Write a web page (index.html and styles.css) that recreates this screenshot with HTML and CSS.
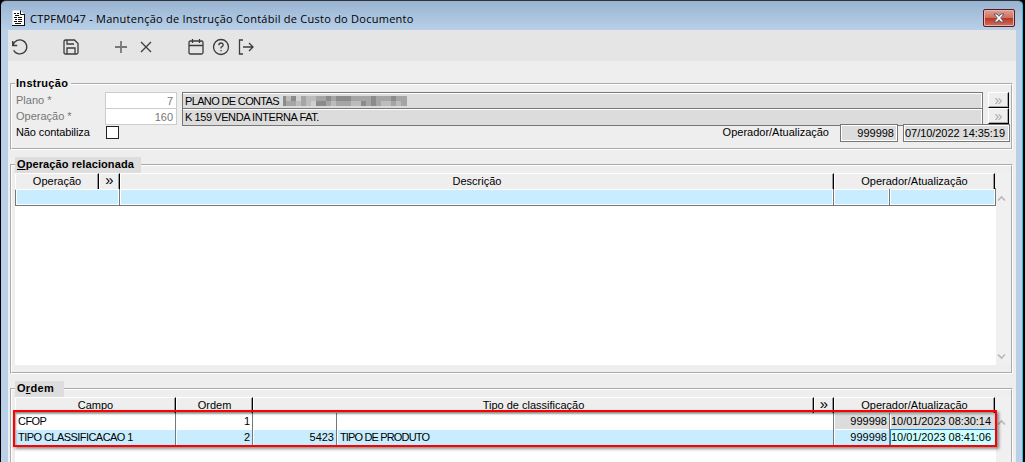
FILE: index.html
```html
<!DOCTYPE html>
<html lang="pt-BR">
<head>
    <meta charset="UTF-8">
    <meta name="viewport" content="width=device-width, initial-scale=1.0">
    <title>CTPFM047 - Manutenção de Instrução Contábil de Custo do Documento</title>
    <link rel="stylesheet" href="styles.css">
</head>
<body>
    <div class="window">
        <header class="titlebar">
            <svg class="doc-icon" width="13" height="16" viewBox="0 0 13 16">
                <path d="M.5.5h8l3.500 3.500v11H.5z" fill="#fff"/>
                <path d="M8.500.5v4h4M12.500 4v11.500M0 15.500h13" fill="none" stroke="#111"/>
                <path d="M2 3.500h2M5 3.500h2M3 5.500h4M2 7.500h3M6 7.500h4M3 9.500h2M6 9.500h4M2 11.500h3M6 11.500h4M3 13.500h6" stroke="#111"/>
            </svg>
            <h1 class="title">CTPFM047 - Manutenção de Instrução Contábil de Custo do Documento</h1>
            <button class="close" aria-label="Fechar">
                <svg width="12" height="10" viewBox="0 0 12 10">
                    <path d="M1 1h3l2 2.300 2-2.300h3L7.700 5 11 9H8L6 6.700 4 9H1l3.300-4z" fill="#fff" stroke="#555f70" stroke-width="1"/>
                </svg>
            </button>
        </header>

        <div class="toolbar">
            <svg class="tool tool-undo" viewBox="0 0 18 18"><path d="M1.700 3v4.500h4.500M2 7.200a7 7 0 1 1 .6 5"/></svg>
            <svg class="tool tool-save" viewBox="0 0 18 18"><path d="M2 3.500Q2 2 3.500 2h9L16 5.500v9q0 1.500-1.500 1.500h-11Q2 16 2 14.500zM5 2v4h7M5 16v-6h8v6"/></svg>
            <svg class="tool tool-add" viewBox="0 0 18 18"><path d="M9 3v12M3 9h12"/></svg>
            <svg class="tool tool-delete" viewBox="0 0 18 18"><path d="M4 4l10 10M14 4L4 14"/></svg>
            <svg class="tool tool-calendar" viewBox="0 0 18 18"><path d="M2 4.500Q2 3 3.500 3h11Q16 3 16 4.500v10q0 1.500-1.500 1.500h-11Q2 16 2 14.500zM2 7.500h14M5.500 1v4M12.500 1v4"/></svg>
            <svg class="tool tool-help" viewBox="0 0 18 18"><circle cx="9" cy="9" r="7.500"/><path d="M6.800 7.200Q7 5 9 5t2.200 2Q11.200 8.300 9 9.300v1.200M9 12v1.300"/></svg>
            <svg class="tool tool-exit" viewBox="0 0 18 18"><path d="M6 2H2.500v14H6M6 9h10M12 5l4 4-4 4"/></svg>
        </div>

        <main class="content">
            <fieldset class="group group-form">
                <legend class="legend-plain">Instrução</legend>
                <div class="field-row disabled">
                    <label class="label">Plano *</label>
                    <span class="code">7</span>
                    <span class="desc desc-plan">PLANO DE CONTAS
                        <svg class="mosaic" width="124" height="10" viewBox="0 0 124 10" shape-rendering="crispEdges">
                            <path fill="#a5a5a5" d="M0 0h124v10H0z"/>
                            <path fill="#8b8b8b" d="M0 0h3v10H0zM8 0h5v5H8zM33 5h10v5H33zM43 0h5v5h-5zM53 0h15v5H53zM78 5h5v5h-5zM88 0h5v10h-5zM108 0h5v5h-5z"/>
                            <path fill="#bcbcbc" d="M3 0h5v5H3zM13 5h5v5h-5zM23 0h10v10H23zM48 5h5v5h-5zM68 5h10v5H68zM98 5h10v5H98zM113 5h5v5h-5z"/>
                            <path fill="#d0d0d0" d="M13 0h5v5h-5zM28 5h5v5h-5z"/>
                        </svg>
                    </span>
                    <button class="lookup">»</button>
                </div>
                <div class="field-row disabled">
                    <label class="label">Operação *</label>
                    <span class="code">160</span>
                    <span class="desc">K 159 VENDA INTERNA FAT.</span>
                    <button class="lookup">»</button>
                </div>
                <div class="field-row last">
                    <label class="label label-check">Não contabiliza</label>
                    <span class="checkbox"></span>
                    <span class="operator-label">Operador/Atualização</span>
                    <span class="readonly readonly-user">999998</span>
                    <span class="readonly readonly-date">07/10/2022 14:35:19</span>
                </div>
            </fieldset>

            <fieldset class="group group-related">
                <legend class="legend-tab"><u>O</u>peração relacionada</legend>
                <div class="list">
                    <div class="grid">
                        <div class="head related-head">
                            <span class="th">Operação</span>
                            <span class="th th-more">»</span>
                            <span class="th">Descrição</span>
                            <span class="th">Operador/Atualização</span>
                        </div>
                        <div class="row related-row selected">
                            <span class="td"></span>
                            <span class="td"></span>
                            <span class="td"></span>
                            <span class="td"></span>
                        </div>
                    </div>
                    <div class="scrollbar">
                        <svg width="9" height="7" viewBox="0 0 9 7"><path d="M1 5.500l3.500-3.500L8 5.500"/></svg>
                        <svg width="9" height="7" viewBox="0 0 9 7"><path d="M1 1.500L4.500 5 8 1.500"/></svg>
                    </div>
                </div>
            </fieldset>

            <fieldset class="group group-order">
                <legend class="legend-tab legend-order">O<u>r</u>dem</legend>
                <div class="list">
                    <div class="grid">
                        <div class="head order-head">
                            <span class="th">Campo</span>
                            <span class="th">Ordem</span>
                            <span class="th">Tipo de classificação</span>
                            <span class="th th-more">»</span>
                            <span class="th">Operador/Atualização</span>
                        </div>
                        <div class="row order-row">
                            <span class="td field">CFOP</span>
                            <span class="td num">1</span>
                            <span class="td"></span>
                            <span class="td"></span>
                            <span class="td num gray">999998</span>
                            <span class="td date gray">10/01/2023 08:30:14</span>
                        </div>
                        <div class="row order-row selected">
                            <span class="td field">TIPO CLASSIFICACAO 1</span>
                            <span class="td num">2</span>
                            <span class="td num">5423</span>
                            <span class="td type">TIPO DE PRODUTO</span>
                            <span class="td num">999998</span>
                            <span class="td date focus">10/01/2023 08:41:06</span>
                        </div>
                        <div class="highlight"></div>
                    </div>
                    <div class="scrollbar">
                        <svg width="9" height="7" viewBox="0 0 9 7"><path d="M1 5.500l3.500-3.500L8 5.500"/></svg>
                    </div>
                </div>
            </fieldset>
        </main>
    </div>
</body>
</html>
```
FILE: styles.css
```css
* {
    box-sizing: border-box;
}

body {
    margin: 0;
    height: 462px;
    overflow: hidden;
    background: #000;
    font-family: "Liberation Sans", Arial, sans-serif;
    font-size: 11px;
    line-height: 14px;
    color: #000;
}

button {
    padding: 0;
    font: inherit;
}

.window {
    width: 1022px;
    height: 480px;
    margin-left: 1px;
    padding: 0 6px 0 7px;
    border-right: 1px solid #1fc8e8;
    border-top: 1px solid #333;
    border-radius: 5px 5px 0 0;
    background: linear-gradient(#98b4d2, #bad0e9 30px, #bad0e9);
    overflow: hidden;
}

/* title bar */
.titlebar {
    display: flex;
    height: 29px;
    padding: 8px 1px 0 4px;
}

.doc-icon {
    margin-top: 1px;
}

.title {
    flex: 1;
    margin: 2px 0 0 5px;
    font-family: "Open Sans", "Noto Sans", sans-serif;
    font-size: 11px;
    font-weight: 400;
    line-height: 15px;
    letter-spacing: 0.25px;
    white-space: nowrap;
}

.close {
    display: flex;
    align-items: center;
    justify-content: center;
    width: 32px;
    height: 18px;
    border: 1px solid #541c22;
    border-radius: 2px;
    background: linear-gradient(#dfa094, #d0705f 48%, #b93422 50%, #d0705d);
    box-shadow: inset 0 0 0 1px #e7b3aa;
}

/* toolbar */
.toolbar {
    display: flex;
    align-items: center;
    height: 31px;
    padding: 3px 3px 0;
    background: #e5e5e5;
}

.tool {
    width: 18px;
    height: 18px;
    fill: none;
    stroke: #3c3c3c;
    stroke-width: 1.3;
}

.tool-save {
    margin-left: 33px;
}

.tool-add {
    margin-left: 32px;
    stroke: #777;
    stroke-width: 1.8;
}

.tool-delete {
    margin-left: 7px;
}

.tool-calendar {
    margin-left: 32px;
}

.tool-help {
    margin-left: 7px;
}

.tool-exit {
    margin-left: 7px;
}

/* groups */
.content {
    height: 420px;
    padding: 15px 3px 0 2px;
    background: #eee;
}

.group {
    min-width: 0;
    margin: 0 0 7px;
    padding: 0;
    border: 2px groove #fff;
}

.group-form {
    height: 74px;
}

.group-related {
    height: 217px;
}

.group-order {
    height: 120px;
}

legend {
    height: 16px;
    margin-left: 3px;
    padding: 0 3px 0 1px;
    font-weight: 700;
    letter-spacing: 0.1px;
    line-height: 15px;
    white-space: nowrap;
}

.legend-plain {
    letter-spacing: 0.3px;
}

.legend-tab {
    width: 126px;
    padding-left: 2px;
    background: #ddd;
}

.legend-order {
    width: 49px;
    letter-spacing: 0.3px;
}

/* form */
.field-row {
    display: flex;
    height: 16px;
    padding-left: 4px;
}

.label {
    width: 89px;
    line-height: 17px;
}

.label-check {
    letter-spacing: -0.1px;
}

.disabled .label,
.code {
    color: #777;
}

.code {
    width: 72px;
    height: 17px;
    padding-right: 3px;
    border: 1px solid #ccc;
    background: #fff;
    text-align: right;
    line-height: 17px;
}

.desc {
    display: flex;
    width: 801px;
    height: 18px;
    margin-left: 5px;
    padding-left: 2px;
    border: 1px solid #777;
    background: #dcdcdc;
    box-shadow: inset 0 1px #fff, inset -1px 0 #fff;
    letter-spacing: -0.42px;
    line-height: 17px;
    white-space: nowrap;
}

.desc-plan {
    letter-spacing: -0.65px;
}

.mosaic {
    margin: 3px 0 0 4px;
}

.lookup {
    width: 21px;
    height: 16px;
    margin-left: 5px;
    border: 1px solid #fff;
    border-right: 1px solid #000;
    border-bottom: 1px solid #000;
    background: #eee;
    box-shadow: inset -1px -1px #aaa;
    color: #aaa;
    font-size: 14px;
    line-height: 11px;
}

.checkbox {
    width: 13px;
    height: 13px;
    margin: 2px 0 0 1px;
    border: 1px solid #222;
    background: #fff;
}

.operator-label {
    margin-left: auto;
    margin-right: 11px;
    line-height: 17px;
}

.readonly {
    position: relative;
    height: 18px;
    border: 1px solid #777;
    background: #dcdcdc;
    box-shadow: inset 0 0 0 1px #fff;
    text-align: right;
    line-height: 17px;
    white-space: nowrap;
}

.readonly-user {
    width: 58px;
    padding-right: 3px;
}

.readonly-date {
    width: 107px;
    margin: 0 1px 0 5px;
    padding-right: 4px;
    letter-spacing: -0.05px;
}

/* lists */
.list {
    display: flex;
    margin-left: 3px;
}

.grid {
    position: relative;
    width: 981px;
    height: 192px;
    background: #fff;
}

.head {
    display: grid;
    height: 15px;
    background: #eee;
}

.related-head {
    grid-template-columns: 84px 21px 714px 161px;
}

.order-head {
    grid-template-columns: 161px 77px 561px 20px 161px;
    height: 16px;
}

.th {
    border-top: 1px solid #fff;
    border-left: 1px solid #fff;
    border-right: 1px solid #000;
    border-bottom: 1px solid #aaa;
    box-shadow: inset -1px 0 #999;
    background: #eee;
    text-align: center;
    line-height: 15px;
}

.th-more {
    font-size: 15px;
    line-height: 11px;
}

.row {
    display: grid;
    height: 16px;
}

.related-row {
    grid-template-columns: 104px 714px 56px 106px;
    height: 18px;
    border: 1px solid #777;
    border-right: 0;
}

.order-row {
    grid-template-columns: 161px 77px 84px 497px 56px 106px;
}

.td {
    padding: 0 2px;
    border-right: 1px solid #777;
    border-bottom: 1px solid #777;
    box-shadow: inset 1px 1px #fff;
    line-height: 17px;
    white-space: nowrap;
}

.related-row .td {
    border-bottom: 0;
    box-shadow: inset 0 0 0 1px #fff;
}

.selected .td {
    background: #c8edff;
}

.num {
    text-align: right;
}

.field {
    padding-left: 3px;
    letter-spacing: -0.55px;
}

.type {
    padding-left: 3px;
    letter-spacing: -0.85px;
}

.date {
    padding-left: 1px;
    letter-spacing: -0.05px;
}

.gray {
    background: #dcdcdc;
}

.selected .focus {
    border: 1px solid #1883d7;
    padding-left: 0;
    line-height: 15px;
    background: #ccffff;
    box-shadow: none;
}

.highlight {
    position: absolute;
    left: -2px;
    top: 13px;
    width: 984px;
    height: 37px;
    border: 2px solid #f00;
    box-shadow: 2px 2px 3px rgba(0, 0, 0, 0.45), inset 1px 2px 2px rgba(0, 0, 0, 0.4);
}

.scrollbar {
    display: flex;
    flex-direction: column;
    justify-content: space-between;
    width: 15px;
    height: 192px;
    padding: 22px 0 5px 1px;
    background: #f0f0f0;
}

.scrollbar path {
    fill: none;
    stroke: #b8b8b8;
    stroke-width: 1.6;
}
```
